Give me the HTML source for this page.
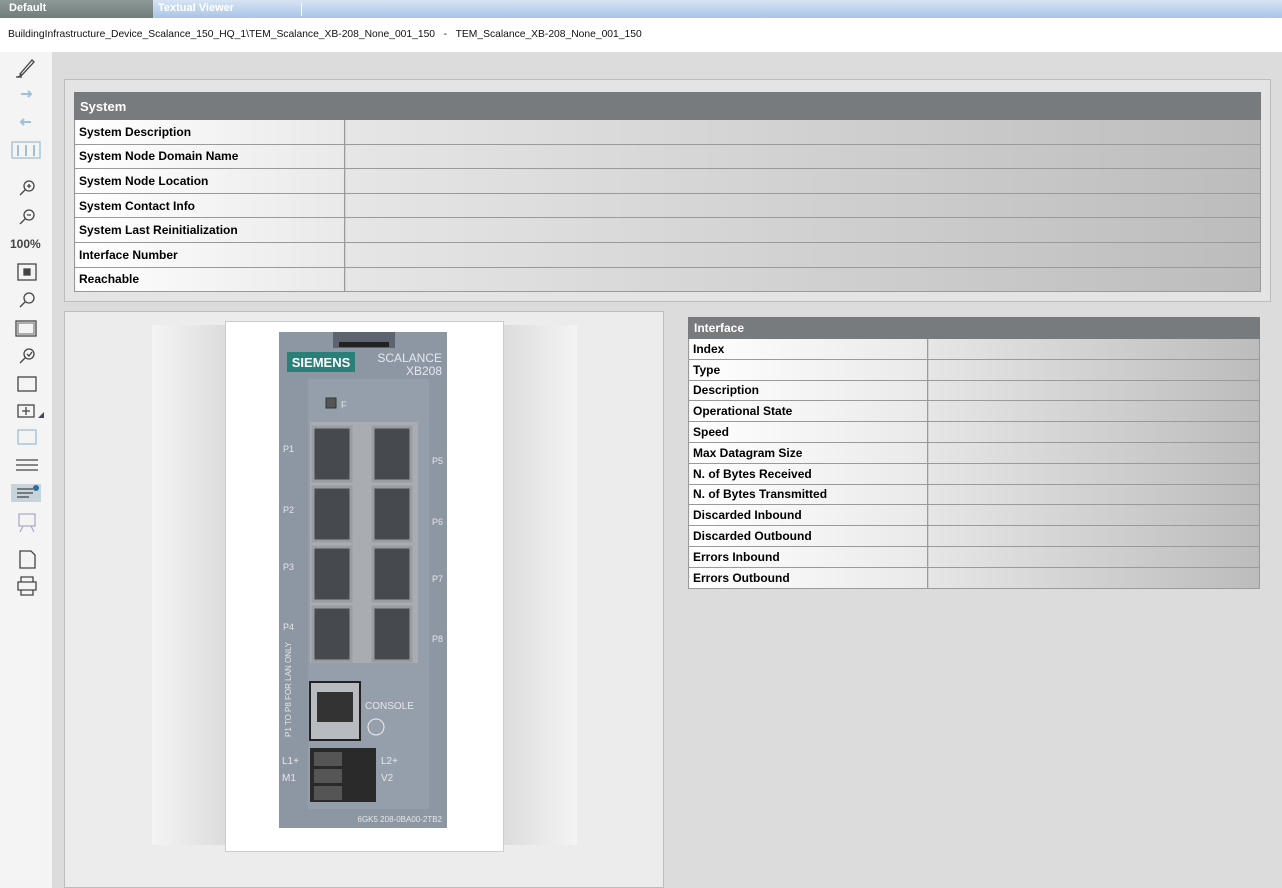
<!DOCTYPE html><html><head><style>
*{margin:0;padding:0;box-sizing:border-box}
body{width:1282px;height:888px;overflow:hidden;background:#dcdcdc;font-family:"Liberation Sans",sans-serif;position:relative}
.abs{position:absolute}
.tabs{left:0;top:0;width:1282px;height:18px;background:linear-gradient(#d6e4f4,#a9c4e6)}
.t1{left:0;top:0;width:153px;height:18px;background:linear-gradient(#8f9a98,#6f7c7a);color:#fff;font-weight:bold;font-size:11px;padding:2px 0 0 9px}
.t2{left:158px;top:2px;color:#fff;font-weight:bold;font-size:11px}
.path{left:0;top:18px;width:1282px;height:34px;background:#fff;font-size:10.3px;color:#111;padding:11px 0 0 8px}
.side{left:0;top:52px;width:52px;height:836px;background:#f4f4f4}
.tbl{border-collapse:collapse;font-size:12px;font-weight:bold;color:#000}
.tbl td{border:1px solid #9a9a9a;padding:0 4px;white-space:nowrap}
.tbl th{background:#777b7d;color:#fff;text-align:left;font-size:13px;padding:0 5px;border:1px solid #777b7d}
.tbl td.l{background:linear-gradient(90deg,#fff,#e9e9e9)}
.tbl td.v{background:linear-gradient(90deg,#e6e6e6,#bcbcbc)}
</style></head><body>
<div class="abs tabs"></div>
<div class="abs t1">Default</div>
<div class="abs t2">Textual Viewer</div>
<div class="abs" style="left:301px;top:3px;width:1px;height:13px;background:#fff"></div>
<div class="abs path">BuildingInfrastructure_Device_Scalance_150_HQ_1\TEM_Scalance_XB-208_None_001_150 &nbsp;&nbsp;- &nbsp;&nbsp;TEM_Scalance_XB-208_None_001_150</div>
<div class="abs side">
<svg width="52" height="560" style="position:absolute;left:0;top:0" fill="none" stroke="#444" stroke-width="1.3">
<path d="M20 22 L32 8 L34 10 L22 23 Z M18 25 L22 23"/><path d="M16 25 H22"/>
<path d="M21 42 H31 M28 39 L31 42 L28 45" stroke="#9ec0d8" stroke-width="2"/>
<path d="M21 70 H31 M24 67 L21 70 L24 73" stroke="#9ec0d8" stroke-width="2"/>
<rect x="12" y="90" width="28" height="16" stroke="#9ec0d8"/><path d="M18 93 V104 M26 93 V104 M34 93 V104" stroke="#9ec0d8" stroke-width="2"/>
<circle cx="29" cy="134" r="5"/><path d="M25 138 L20 143 M27 134 H31 M29 132 V136"/>
<circle cx="29" cy="163" r="5"/><path d="M25 167 L20 172 M27 163 H31"/>
<rect x="18" y="212" width="18" height="16"/><rect x="24" y="217" width="6" height="6" fill="#444"/>
<circle cx="29" cy="246" r="5"/><path d="M25 250 L20 255"/>
<rect x="16" y="269" width="20" height="15"/><rect x="18" y="271" width="16" height="11" stroke="#888"/>
<circle cx="29" cy="302" r="5"/><path d="M25 306 L20 311 M27 302 L29 304 L32 300"/>
<rect x="18" y="325" width="18" height="14"/>
<rect x="18" y="353" width="16" height="12"/><path d="M26 355 V363 M22 359 H30"/><path d="M38 366 L44 360 V366 Z" fill="#446" stroke="none"/>
<rect x="18" y="378" width="18" height="14" stroke="#9ec0d8"/>
<path d="M16 408 H38 M16 413 H38 M16 418 H38"/>
<rect x="11" y="432" width="30" height="18" fill="#c8d4dc" stroke="none"/><path d="M17 437 H33 M17 441 H33 M17 445 H29"/><circle cx="36" cy="436" r="3" fill="#2a6fa0" stroke="none"/>
<path d="M19 462 H35 V474 H19 Z M23 474 L20 480 M31 474 L34 480" stroke="#aac"/>
<path d="M20 499 H31 L35 503 V516 H20 Z"/>
<path d="M18 530 H36 V538 H18 Z M21 530 V525 H33 V530 M21 538 V543 H33 V538"/>
</svg>
<div class="abs" style="left:10px;top:185px;font-size:12px;font-weight:bold;color:#444">100%</div>
</div>
<div class="abs" style="left:64px;top:79px;width:1207px;height:223px;background:#e4e4e4;border:1px solid #bdbdbd"></div>
<table class="tbl abs" style="left:74px;top:92px;width:1187px">
<tr style="height:27px"><th colspan="2">System</th></tr>
<tr style="height:24.6px"><td class="l" style="width:270px">System Description</td><td class="v"></td></tr>
<tr style="height:24.6px"><td class="l">System Node Domain Name</td><td class="v"></td></tr>
<tr style="height:24.6px"><td class="l">System Node Location</td><td class="v"></td></tr>
<tr style="height:24.6px"><td class="l">System Contact Info</td><td class="v"></td></tr>
<tr style="height:24.6px"><td class="l">System Last Reinitialization</td><td class="v"></td></tr>
<tr style="height:24.6px"><td class="l">Interface Number</td><td class="v"></td></tr>
<tr style="height:24.6px"><td class="l">Reachable</td><td class="v"></td></tr>
</table>
<div class="abs" style="left:64px;top:311px;width:600px;height:577px;background:#ececec;border:1px solid #bdbdbd"></div>
<div class="abs" style="left:152px;top:325px;width:74px;height:520px;background:linear-gradient(90deg,#f4f4f4,#dcdcdc)"></div>
<div class="abs" style="left:503px;top:325px;width:74px;height:520px;background:linear-gradient(90deg,#dcdcdc,#f4f4f4)"></div>
<div class="abs" style="left:225px;top:321px;width:279px;height:531px;background:#fff;border:1px solid #ccc"></div>
<svg class="abs" style="left:279px;top:332px" width="170" height="498" font-family="Liberation Sans">
<rect x="0" y="0" width="168" height="496" fill="#8d97a4"/>
<rect x="54" y="0" width="62" height="16" fill="#5d6470"/><rect x="60" y="10" width="50" height="5" fill="#222"/>
<rect x="8" y="20" width="68" height="20" fill="#2a7f78"/>
<text x="42" y="35" font-size="13" font-weight="bold" fill="#fff" text-anchor="middle">SIEMENS</text>
<text x="163" y="30" font-size="12" fill="#e4e8ee" text-anchor="end">SCALANCE</text>
<text x="163" y="43" font-size="12" fill="#e4e8ee" text-anchor="end">XB208</text>
<rect x="29" y="47" width="121" height="430" fill="#959fab"/>
<rect x="47" y="66" width="10" height="10" fill="#555" stroke="#333"/><text x="62" y="76" font-size="9" fill="#e6e6e6">F</text>
<rect x="31" y="90" width="108" height="241" fill="#a9adb1"/>
<g fill="#46494d" stroke="#9a9ea2" stroke-width="3">
<rect x="34" y="95" width="38" height="54"/><rect x="94" y="95" width="38" height="54"/>
<rect x="34" y="155" width="38" height="54"/><rect x="94" y="155" width="38" height="54"/>
<rect x="34" y="215" width="38" height="54"/><rect x="94" y="215" width="38" height="54"/>
<rect x="34" y="275" width="38" height="54"/><rect x="94" y="275" width="38" height="54"/>
</g>
<g font-size="9" fill="#e6e6e6"><text x="4" y="120">P1</text><text x="4" y="181">P2</text><text x="4" y="238">P3</text><text x="4" y="298">P4</text>
<text x="153" y="132">P5</text><text x="153" y="193">P6</text><text x="153" y="250">P7</text><text x="153" y="310">P8</text></g>
<text transform="translate(12,405) rotate(-90)" font-size="8" fill="#e6e6e6">P1 TO P8 FOR LAN ONLY</text>
<rect x="31" y="350" width="50" height="58" fill="#b8bcc0" stroke="#222" stroke-width="2"/><rect x="38" y="360" width="36" height="30" fill="#333"/>
<text x="86" y="377" font-size="10" fill="#e6e6e6">CONSOLE</text>
<circle cx="97" cy="395" r="8" fill="none" stroke="#eee"/>
<rect x="31" y="416" width="66" height="54" fill="#2a2a2a"/>
<g fill="#555"><rect x="35" y="420" width="28" height="14"/><rect x="35" y="437" width="28" height="14"/><rect x="35" y="454" width="28" height="14"/></g>
<g font-size="10" fill="#e6e6e6"><text x="3" y="432">L1+</text><text x="3" y="449">M1</text><text x="102" y="432">L2+</text><text x="102" y="449">V2</text></g>
<text x="163" y="490" font-size="8" fill="#e6e6e6" text-anchor="end">6GK5 208-0BA00-2TB2</text>
</svg>
<table class="tbl abs" style="left:688px;top:317px;width:572px">
<tr style="height:21px"><th colspan="2" style="font-size:12px">Interface</th></tr>
<tr style="height:20.8px"><td class="l" style="width:239px">Index</td><td class="v"></td></tr>
<tr style="height:20.8px"><td class="l">Type</td><td class="v"></td></tr>
<tr style="height:20.8px"><td class="l">Description</td><td class="v"></td></tr>
<tr style="height:20.8px"><td class="l">Operational State</td><td class="v"></td></tr>
<tr style="height:20.8px"><td class="l">Speed</td><td class="v"></td></tr>
<tr style="height:20.8px"><td class="l">Max Datagram Size</td><td class="v"></td></tr>
<tr style="height:20.8px"><td class="l">N. of Bytes Received</td><td class="v"></td></tr>
<tr style="height:20.8px"><td class="l">N. of Bytes Transmitted</td><td class="v"></td></tr>
<tr style="height:20.8px"><td class="l">Discarded Inbound</td><td class="v"></td></tr>
<tr style="height:20.8px"><td class="l">Discarded Outbound</td><td class="v"></td></tr>
<tr style="height:20.8px"><td class="l">Errors Inbound</td><td class="v"></td></tr>
<tr style="height:20.8px"><td class="l">Errors Outbound</td><td class="v"></td></tr>
</table>
</body></html>
